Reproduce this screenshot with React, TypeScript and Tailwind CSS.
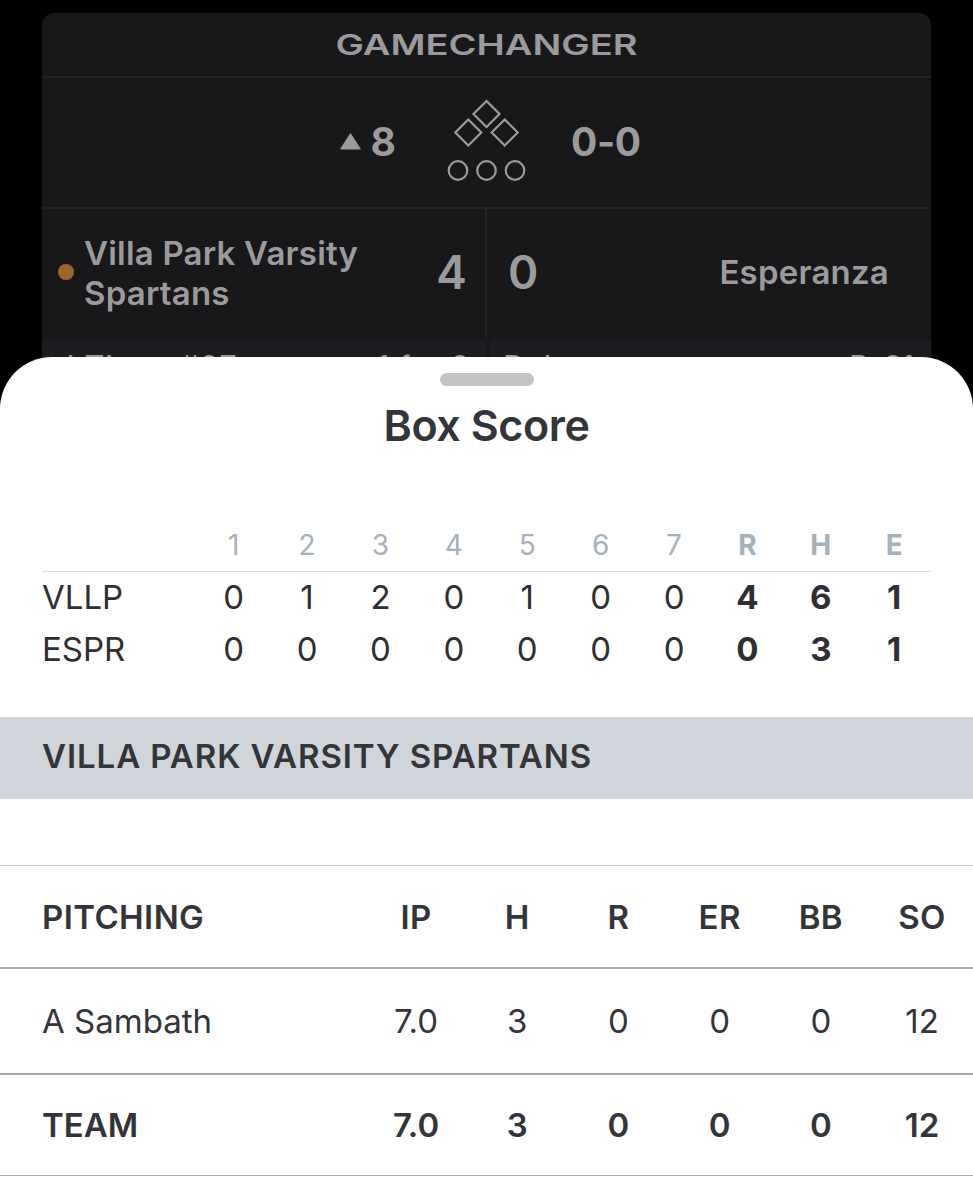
const innings = ['1', '2', '3', '4', '5', '6', '7', 'R', 'H', 'E'];
const lines = [
  { team: 'VLLP', runs: ['0', '1', '2', '0', '1', '0', '0', '4', '6', '1'] },
  { team: 'ESPR', runs: ['0', '0', '0', '0', '0', '0', '0', '0', '3', '1'] },
];

function ScoreBoard() {
  return (
    <div className="mx-[42px] h-[450px] overflow-hidden rounded-t-[12px] bg-[#18181a] text-[#9b9b9e]">
      <div className="flex h-[65px] items-center justify-center border-b-2 border-[#232325]">
        <svg className="overflow-visible" width="340" height="40" viewBox="0 0 340 40" fill="currentColor">
          <text x="18.5" y="30" fontSize="28.5" fontWeight="600" textLength="302" lengthAdjust="spacingAndGlyphs">GAMECHANGER</text>
        </svg>
      </div>
      <div className="flex h-[131px] border-b-2 border-[#232325]">
        <div className="flex w-[354px] items-center justify-end gap-[10px] pb-px text-[39px] font-bold">
          <svg className="-mt-[2px]" width="21" height="17" viewBox="0 0 20 16" fill="currentColor">
            <path d="M10 1 19 15H1Z" stroke="currentColor" strokeWidth="1.4" strokeLinejoin="round" />
          </svg>
          <span>8</span>
        </div>
        <svg className="ml-[48px] mt-[20px]" width="84" height="88" viewBox="0 0 84 88" fill="none" stroke="currentColor" strokeWidth="2.2">
          <path d="M42.5 3 55.5 16 42.5 29 29.5 16ZM24.3 21.5 37.3 34.5 24.3 47.5 11.3 34.5ZM60.7 21.5 73.7 34.5 60.7 47.5 47.7 34.5Z" />
          <circle cx="14" cy="72.5" r="9.3" />
          <circle cx="42.5" cy="72.5" r="9.3" />
          <circle cx="71" cy="72.5" r="9.3" />
        </svg>
        <div className="ml-[43px] flex items-center pb-px text-[39px] font-bold tracking-[-0.4px]">0-0</div>
      </div>
      <div className="flex h-[129px] font-semibold">
        <div className="flex w-[445px] items-center border-r-2 border-[#232325] pb-[3px] pl-[16px] pr-[18px]">
          <span className="h-4 w-4 rounded-full bg-[#9b672c]" />
          <span className="ml-[10px] flex-1 pt-px text-[33px] leading-[40px] tracking-[0.2px]">Villa Park Varsity<br />Spartans</span>
          <span className="text-[46px]">4</span>
        </div>
        <div className="flex flex-1 items-center justify-between pb-[3px] pl-[21px] pr-[42px]">
          <span className="text-[46px]">0</span>
          <span className="pt-[2px] text-[33px] tracking-[0.2px]">Esperanza</span>
        </div>
      </div>
      <div className="mt-[2px] flex gap-[4px] text-[31px] leading-[34px]">
        <div className="flex w-[444px] justify-between bg-[#1d1d21] pl-[15px] pr-[16px] pt-[10px]">
          <span className="tracking-[0.6px]">J Tieno #27</span>
          <span className="tracking-[0.5px]">1 for 2</span>
        </div>
        <div className="flex flex-1 justify-between bg-[#1d1d21] pl-[13px] pr-[18px] pt-[10px]">
          <span>D Jones</span>
          <span className="tracking-[-1px]">P: 21</span>
        </div>
      </div>
    </div>
  );
}

function LineScore() {
  return (
    <div className="mx-[42px] text-[33px] text-[#2f2f31]">
      <div className="grid h-[54px] grid-cols-[155px_repeat(10,73.4px)] items-center border-b border-[#d9dbdd] text-center text-[28px] text-[#a6b1bb]">
        <span />
        {innings.map((n, i) => (
          <span key={n} className={i > 6 ? 'font-bold' : 'font-normal'}>{n}</span>
        ))}
      </div>
      {lines.map((l) => (
        <div key={l.team} className="grid h-[52px] grid-cols-[155px_repeat(10,73.4px)] items-center text-center">
          <span className="text-left">{l.team}</span>
          {l.runs.map((r, i) => (
            <span key={i} className={i > 6 ? 'font-bold' : ''}>{r}</span>
          ))}
        </div>
      ))}
    </div>
  );
}

function PitchingRow({ cells, className }: { cells: string[]; className: string }) {
  return (
    <div className={`grid grid-cols-[365.5px_repeat(6,101.2px)] items-center pt-[2px] text-center text-[33px] ${className}`}>
      {cells.map((c, i) => (
        <span key={i} className={i === 0 ? 'pl-[42px] text-left' : ''}>{c}</span>
      ))}
    </div>
  );
}

export default function App() {
  return (
    <div className="h-[1200px] overflow-hidden bg-black pt-[13px] font-['Inter',sans-serif]">
      <ScoreBoard />
      <div className="relative z-10 -mt-[106px] h-[843px] overflow-hidden rounded-t-[52px] bg-white text-[#343539]">
        <div className="mx-auto mt-[15.5px] h-[13px] w-[94px] rounded-full bg-[#c2c3c2]" />
        <h1 className="mt-[13.5px] text-center text-[43px] font-semibold leading-[52px] tracking-[-0.4px]">Box Score</h1>
        <div className="mt-[67px]"><LineScore /></div>
        <div className="mt-[41px] flex h-[82px] items-center bg-[#cfd5db] pb-[2px] pl-[42px] text-[33px] font-semibold tracking-[0.92px]">VILLA PARK VARSITY SPARTANS</div>
        <div className="mt-[66px] overflow-hidden border-t border-[#c0c5ca]">
          <PitchingRow cells={['PITCHING', 'IP', 'H', 'R', 'ER', 'BB', 'SO']} className="h-[103px] border-b-2 border-[#a4adb6] font-semibold tracking-[0.4px]" />
          <PitchingRow cells={['A Sambath', '7.0', '3', '0', '0', '0', '12']} className="h-[106px] border-b-2 border-[#a4adb6]" />
          <PitchingRow cells={['TEAM', '7.0', '3', '0', '0', '0', '12']} className="h-[101px] border-b border-[#a8abb3] font-semibold" />
        </div>
      </div>
    </div>
  );
}
